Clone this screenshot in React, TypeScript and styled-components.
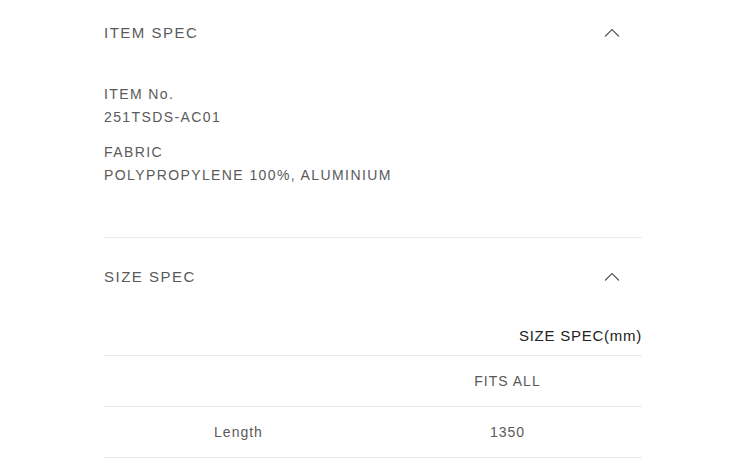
import React from 'react';
import styled, { createGlobalStyle } from 'styled-components';

const GlobalStyle = createGlobalStyle`
  body {
    margin: 0;
    background: #ffffff;
    font-family: 'Liberation Sans', Arial, sans-serif;
    color: #5a5a5a;
  }
`;

const Page = styled.div`
  max-width: 538px;
  margin: 0 auto;
`;

const Section = styled.section<{ $divider?: boolean }>`
  border-bottom: ${({ $divider }) => ($divider ? '1px solid #ebebeb' : 'none')};
`;

const Header = styled.button<{ $top: number }>`
  display: flex;
  align-items: center;
  justify-content: space-between;
  width: 100%;
  padding: ${({ $top }) => `${$top}px 0 24px`};
  border: none;
  background: none;
  cursor: pointer;
  font-family: inherit;
`;

const Title = styled.span`
  font-size: 15px;
  line-height: 18px;
  letter-spacing: 0.1em;
  color: #5a5a5a;
`;

const Chevron = styled.svg`
  width: 16px;
  height: 10px;
  margin-right: 22px;
  display: block;
`;

const Body = styled.div`
  padding: 17px 0 51px;
  display: flex;
  flex-direction: column;
  gap: 13px;
`;

const Field = styled.div`
  font-size: 14px;
  line-height: 22.5px;
  letter-spacing: 0.1em;
  color: #5a5a5a;
`;

const Caption = styled.div`
  margin-top: 16px;
  margin-bottom: 9px;
  text-align: right;
  font-size: 15px;
  line-height: 20px;
  letter-spacing: 0.05em;
  color: #222222;
`;

const Table = styled.div`
  border-top: 1px solid #ebebeb;
`;

const Row = styled.div`
  display: grid;
  grid-template-columns: 1fr 1fr;
  height: 50px;
  border-bottom: 1px solid #ebebeb;
`;

const Cell = styled.div`
  display: flex;
  align-items: center;
  justify-content: center;
  font-size: 14px;
  letter-spacing: 1px;
  color: #5a5a5a;
`;

function ChevronUp(): JSX.Element {
  return (
    <Chevron viewBox="0 0 16 10" fill="none">
      <polyline points="1,8.5 8,1.5 15,8.5" stroke="#555" strokeWidth="1.1" />
    </Chevron>
  );
}

export default function App(): JSX.Element {
  return (
    <Page>
      <GlobalStyle />
      <Section $divider>
        <Header $top={24}>
          <Title>ITEM SPEC</Title>
          <ChevronUp />
        </Header>
        <Body>
          <div>
            <Field>ITEM No.</Field>
            <Field>251TSDS-AC01</Field>
          </div>
          <div>
            <Field>FABRIC</Field>
            <Field>POLYPROPYLENE 100%, ALUMINIUM</Field>
          </div>
        </Body>
      </Section>
      <Section>
        <Header $top={30}>
          <Title>SIZE SPEC</Title>
          <ChevronUp />
        </Header>
        <Caption>SIZE SPEC(mm)</Caption>
        <Table>
          <Row>
            <Cell />
            <Cell>FITS ALL</Cell>
          </Row>
          <Row>
            <Cell>Length</Cell>
            <Cell>1350</Cell>
          </Row>
        </Table>
      </Section>
    </Page>
  );
}
